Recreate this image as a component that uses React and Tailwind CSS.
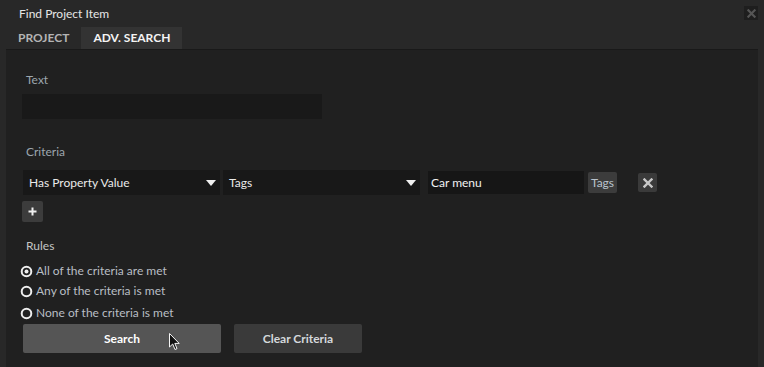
const font = { fontFamily: 'Lato, "Noto Sans", sans-serif' };

function Triangle() {
  return (
    <svg width="10" height="6" viewBox="0 0 10 6" className="shrink-0">
      <path d="M0 0 H10 L5 6 Z" fill="#f0f0f0" />
    </svg>
  );
}

function Dropdown({ label, className }) {
  return (
    <div className={`h-[25px] bg-[#181818] flex items-center justify-between pl-[6px] pr-[4px] ${className}`}>
      <span className="text-[12px] text-[#eaeaea]">{label}</span>
      <Triangle />
    </div>
  );
}

function Radio({ checked, label, className }) {
  return (
    <div className={`flex items-center gap-[3px] ${className}`}>
      <svg width="13" height="13" viewBox="0 0 13 13" className="shrink-0">
        <circle cx="6.5" cy="6.5" r="4.8" fill="none" stroke="#eeeeee" strokeWidth="2" />
        {checked && <circle cx="6.5" cy="6.5" r="2" fill="#eeeeee" />}
      </svg>
      <span className="text-[12px] text-[#b9bec4]">{label}</span>
    </div>
  );
}

function XGlyph({ color, size = 10 }) {
  return (
    <svg width={size} height={size} viewBox="0 0 10 10">
      <path d="M1.5 1.5 L8.5 8.5 M8.5 1.5 L1.5 8.5" stroke={color} strokeWidth="2.4" strokeLinecap="square" />
    </svg>
  );
}

function Cursor() {
  return (
    <svg width="12" height="18" viewBox="0 0 12 18" className="absolute left-[169px] top-[333px]">
      <path d="M0.5 0.5 L0.5 14 L3.7 11 L6 16.5 L8 15.6 L5.8 10.4 L10.2 10.4 Z" fill="#111" stroke="#f5f5f5" strokeWidth="1" />
    </svg>
  );
}

export default function App() {
  return (
    <div className="relative w-[764px] h-[367px] bg-[#282828] flex flex-col overflow-hidden" style={font}>
      <div className="h-[27px] flex items-center justify-between pl-[19px] pr-[6px]">
        <span className="text-[12px] text-[#e6e6e6]">Find Project Item</span>
        <div className="w-[14px] h-[14px] bg-[#1e1e1e] flex items-center justify-center mt-[-1px]">
          <XGlyph color="#555555" size={9} />
        </div>
      </div>
      <div className="h-[22px] flex ml-[6px]">
        <div className="px-[12px] flex items-center text-[12px] font-bold text-[#b4b4b4]">PROJECT</div>
        <div className="px-[12px] flex items-center text-[12px] font-bold text-[#f4f4f4] bg-[#333333]">ADV. SEARCH</div>
      </div>
      <div className="flex-1 ml-[6px] w-[752px] bg-[#202020] border-t border-[#191919] pl-[16px] flex flex-col">
        <div className="mt-[22px] ml-[4px] text-[12px] text-[#9ca6ae] leading-[16px]">Text</div>
        <div className="mt-[6px] w-[300px] h-[25px] bg-[#191919]"></div>

        <div className="mt-[25px] ml-[4px] text-[12px] text-[#9ca6ae] leading-[16px]">Criteria</div>
        <div className="mt-[10px] flex items-center">
          <Dropdown label="Has Property Value" className="w-[197px] ml-[1px]" />
          <Dropdown label="Tags" className="w-[197px] ml-[3px]" />
          <div className="ml-[8px] w-[156px] h-[23px] bg-[#161616] flex items-center pl-[3px] text-[12px] text-[#f2f2f2]">Car menu</div>
          <div className="ml-[4px] w-[29px] h-[21px] bg-[#3c3c3c] rounded-[2px] flex items-center justify-center text-[12px] text-[#b9c3cc]">Tags</div>
          <div className="ml-[21px] w-[19px] h-[19px] bg-[#3a3a3a] rounded-[2px] flex items-center justify-center">
            <XGlyph color="#c8c8c8" size={10} />
          </div>
        </div>
        <div className="mt-[6px] w-[21px] h-[21px] bg-[#3c3c3c] rounded-[2px] flex items-center justify-center">
          <svg width="9" height="9" viewBox="0 0 9 9">
            <path d="M4.5 0.5 V8.5 M0.5 4.5 H8.5" stroke="#f0f0f0" strokeWidth="2" />
          </svg>
        </div>

        <div className="mt-[16px] ml-[4px] text-[12px] text-[#c4c4c4] leading-[16px]">Rules</div>
        <Radio checked label="All of the criteria are met" className="mt-[7px] -ml-[2px] h-[20px]" />
        <Radio label="Any of the criteria is met" className="-ml-[2px] h-[20px]" />
        <Radio label="None of the criteria is met" className="mt-[2px] -ml-[2px] h-[20px]" />

        <div className="mt-[1px] flex">
          <div className="ml-[1px] w-[198px] h-[29px] bg-[#555555] rounded-[2px] flex items-center justify-center text-[12px] font-bold text-[#ffffff]">Search</div>
          <div className="ml-[13px] w-[128px] h-[29px] bg-[#3a3a3a] rounded-[2px] flex items-center justify-center text-[12px] font-bold text-[#d4d8dc]">Clear Criteria</div>
        </div>
      </div>
      <Cursor />
    </div>
  );
}
